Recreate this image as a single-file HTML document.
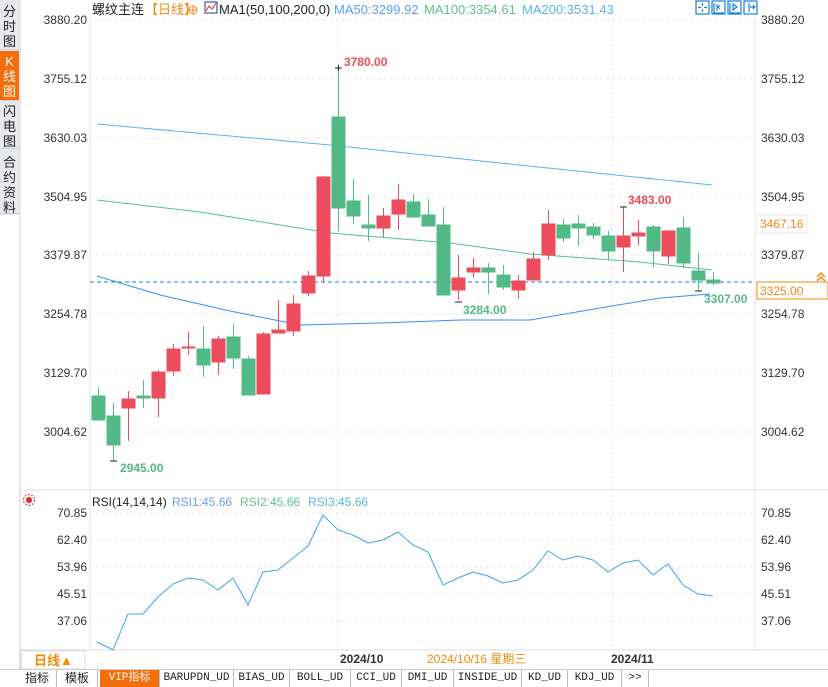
<!DOCTYPE html>
<html><head><meta charset="utf-8">
<style>
body{margin:0;width:828px;height:686px;overflow:hidden;background:#fff;font-family:"Liberation Sans","Noto Sans CJK SC",sans-serif;position:relative}
.side{position:absolute;left:0;top:0;width:19px;height:215px;background:#e6e8ee}
.side div{position:absolute;left:0;width:19px;font-size:13px;line-height:15px;text-align:center;color:#222;border-bottom:1px solid #cfd2da}
.tabs{position:absolute;left:0;top:669px;width:828px;height:17px;background:#fff;border-top:1px solid #ccc;font-size:11px}
.tabs span{position:absolute;top:0;height:17px;line-height:17px;text-align:center;border-right:1px solid #bbb;color:#222;font-family:"Liberation Mono","Noto Sans CJK SC",monospace}
svg text{font-family:"Liberation Sans","Noto Sans CJK SC",sans-serif}
</style></head><body>
<svg width="828" height="686" style="position:absolute;left:0;top:0">
<rect x="20" y="0" width="808" height="669" fill="#fff"/>
<line x1="20" y1="0" x2="20" y2="669" stroke="#ccc"/>
<line x1="90" y1="18" x2="90" y2="650" stroke="#e6e6e6"/>
<line x1="755" y1="18" x2="755" y2="650" stroke="#e6e6e6"/>
<line x1="20" y1="490" x2="828" y2="490" stroke="#ddd"/>
<line x1="20" y1="650" x2="828" y2="650" stroke="#ddd"/>
<g stroke="#e8e8e8" stroke-dasharray="3,3">
<line x1="90" y1="20" x2="755" y2="20"/><line x1="90" y1="79" x2="755" y2="79"/><line x1="90" y1="138" x2="755" y2="138"/><line x1="90" y1="197" x2="755" y2="197"/><line x1="90" y1="255" x2="755" y2="255"/><line x1="90" y1="314" x2="755" y2="314"/><line x1="90" y1="373" x2="755" y2="373"/><line x1="90" y1="432" x2="755" y2="432"/>
<line x1="90" y1="513" x2="755" y2="513"/><line x1="90" y1="540" x2="755" y2="540"/><line x1="90" y1="567" x2="755" y2="567"/><line x1="90" y1="594" x2="755" y2="594"/><line x1="90" y1="621" x2="755" y2="621"/>
<line x1="338" y1="20" x2="338" y2="650"/><line x1="612" y1="20" x2="612" y2="650"/>
</g>
<g font-size="12" fill="#333" text-anchor="end">
<text x="87" y="24">3880.20</text><text x="87" y="83">3755.12</text><text x="87" y="142">3630.03</text><text x="87" y="201">3504.95</text><text x="87" y="259">3379.87</text><text x="87" y="318">3254.78</text><text x="87" y="377">3129.70</text><text x="87" y="436">3004.62</text>
<text x="87" y="517">70.85</text><text x="87" y="544">62.40</text><text x="87" y="571">53.96</text><text x="87" y="598">45.51</text><text x="87" y="625">37.06</text>
</g>
<g font-size="12" fill="#333">
<text x="761" y="24">3880.20</text><text x="761" y="83">3755.12</text><text x="761" y="142">3630.03</text><text x="761" y="201">3504.95</text><text x="761" y="259">3379.87</text><text x="761" y="318">3254.78</text><text x="761" y="377">3129.70</text><text x="761" y="436">3004.62</text>
<text x="761" y="517">70.85</text><text x="761" y="544">62.40</text><text x="761" y="571">53.96</text><text x="761" y="598">45.51</text><text x="761" y="625">37.06</text>
</g>
<rect x="757" y="215" width="50" height="18" fill="#fff" stroke="#e4e8ec"/>
<text x="760" y="228" font-size="12" fill="#f08a18">3467.16</text>
<rect x="757" y="282" width="71" height="17" fill="#fff" stroke="#f58a0a"/>
<text x="760" y="295" font-size="12" fill="#f08a18">3325.00</text>
<path d="M817 277l4-4 4 4M817 281l4-4 4 4" stroke="#f58a0a" fill="none" stroke-width="1.5"/>
<!-- header -->
<text x="92" y="14" font-size="13" fill="#222">螺纹主连</text>
<text x="145" y="14" font-size="13" fill="#f08a18">【日线】</text>
<circle cx="193" cy="10" r="4" fill="none" stroke="#f08a18"/><path d="M189 10h8M193 6v8" stroke="#f08a18"/>
<rect x="205" y="2" width="12" height="11" fill="#fff" stroke="#223a8a"/><path d="M206 11l3-5 3 3 4-6" stroke="#d22" fill="none"/>
<text x="219" y="14" font-size="13" fill="#222">MA1(50,100,200,0)</text>
<text x="334" y="14" font-size="13" fill="#5aa0ff">MA50:3299.92</text>
<text x="424" y="14" font-size="13" fill="#5cc48a">MA100:3354.61</text>
<text x="522" y="14" font-size="13" fill="#59b6e8">MA200:3531.43</text>
<g fill="none" stroke="#1a7fd0" stroke-width="1.2">
<rect x="696" y="1" width="13" height="13"/><rect x="712" y="1" width="13" height="13"/><rect x="728" y="1" width="13" height="13"/><rect x="744" y="1" width="13" height="13"/>
<path d="M702.5 3v3M702.5 9v3M698 7.5h3M704 7.5h3M714 3v10h10M717 4v7M720 5l-2 2 2 2M730 3v10h10M733 4l4 3-4 3zM749 3v9M750 7h5M753 5l2 2-2 2"/>
</g>
<!-- MA lines -->
<polyline fill="none" stroke="#59b6e8" points="97,124 330,145 500,163 712,185"/>
<polyline fill="none" stroke="#4fc48a" points="97,200 200,212 330,233 450,243 530,254 640,262 712,270"/>
<polyline fill="none" stroke="#3a8ef5" points="97,276 160,295 230,311 300,325 380,323 460,320 530,320 600,308 660,298 710,294"/>
<line x1="90" y1="282" x2="755" y2="282" stroke="#1a7fe8" stroke-dasharray="4,3"/>
<!-- candles -->
<g id="c">
<g stroke="#52b987" fill="#52b987">
<line x1="98.5" y1="387" x2="98.5" y2="420"/><rect x="92" y="396" width="13" height="24"/>
<line x1="113.5" y1="403" x2="113.5" y2="461"/><rect x="107" y="416" width="13" height="29"/>
<line x1="143.5" y1="380" x2="143.5" y2="408"/><rect x="137" y="396" width="13" height="2"/>
<line x1="203.5" y1="326" x2="203.5" y2="377"/><rect x="197" y="349" width="13" height="16"/>
<line x1="233.5" y1="324" x2="233.5" y2="369"/><rect x="227" y="337" width="13" height="21"/>
<line x1="248.5" y1="356" x2="248.5" y2="395"/><rect x="242" y="359" width="13" height="36"/>
<line x1="338.5" y1="68" x2="338.5" y2="231"/><rect x="332" y="117" width="13" height="91"/>
<line x1="353.5" y1="179" x2="353.5" y2="224"/><rect x="347" y="201" width="13" height="15"/>
<line x1="368.5" y1="195" x2="368.5" y2="241"/><rect x="362" y="225" width="13" height="3"/>
<line x1="413.5" y1="194" x2="413.5" y2="218"/><rect x="407" y="202" width="13" height="15"/>
<line x1="428.5" y1="199" x2="428.5" y2="226"/><rect x="422" y="215" width="13" height="11"/>
<line x1="443.5" y1="207" x2="443.5" y2="295"/><rect x="437" y="225" width="13" height="70"/>
<line x1="488.5" y1="263" x2="488.5" y2="294"/><rect x="482" y="268" width="13" height="4"/>
<line x1="503.5" y1="265" x2="503.5" y2="290"/><rect x="497" y="275" width="13" height="12"/>
<line x1="563.5" y1="219" x2="563.5" y2="242"/><rect x="557" y="225" width="13" height="13"/>
<line x1="578.5" y1="215" x2="578.5" y2="246"/><rect x="572" y="224" width="13" height="4"/>
<line x1="593.5" y1="223" x2="593.5" y2="239"/><rect x="587" y="227" width="13" height="8"/>
<line x1="608.5" y1="231" x2="608.5" y2="260"/><rect x="602" y="236" width="13" height="15"/>
<line x1="653.5" y1="225" x2="653.5" y2="268"/><rect x="647" y="227" width="13" height="24"/>
<line x1="683.5" y1="217" x2="683.5" y2="268"/><rect x="677" y="228" width="13" height="35"/>
<line x1="698.5" y1="253" x2="698.5" y2="291"/><rect x="692" y="271" width="13" height="9"/>
<line x1="713.5" y1="272" x2="713.5" y2="285"/><rect x="707" y="280" width="13" height="3"/>
</g>
<g stroke="#ec4c5c" fill="#ec4c5c">
<line x1="128.5" y1="391" x2="128.5" y2="441"/><rect x="122" y="399" width="13" height="9"/>
<line x1="158.5" y1="370" x2="158.5" y2="417"/><rect x="152" y="372" width="13" height="26"/>
<line x1="173.5" y1="344" x2="173.5" y2="376"/><rect x="167" y="349" width="13" height="22"/>
<line x1="188.5" y1="332" x2="188.5" y2="355"/><rect x="182" y="347" width="13" height="1"/>
<line x1="218.5" y1="336" x2="218.5" y2="375"/><rect x="212" y="339" width="13" height="23"/>
<line x1="263.5" y1="332" x2="263.5" y2="394"/><rect x="257" y="334" width="13" height="60"/>
<line x1="278.5" y1="300" x2="278.5" y2="333"/><rect x="272" y="330" width="13" height="3"/>
<line x1="293.5" y1="295" x2="293.5" y2="336"/><rect x="287" y="304" width="13" height="27"/>
<line x1="308.5" y1="271" x2="308.5" y2="296"/><rect x="302" y="276" width="13" height="17"/>
<line x1="323.5" y1="176" x2="323.5" y2="283"/><rect x="317" y="177" width="13" height="99"/>
<line x1="383.5" y1="208" x2="383.5" y2="237"/><rect x="377" y="216" width="13" height="12"/>
<line x1="398.5" y1="184" x2="398.5" y2="230"/><rect x="392" y="200" width="13" height="14"/>
<line x1="458.5" y1="255" x2="458.5" y2="300"/><rect x="452" y="278" width="13" height="12"/>
<line x1="473.5" y1="258" x2="473.5" y2="278"/><rect x="467" y="268" width="13" height="4"/>
<line x1="518.5" y1="275" x2="518.5" y2="299"/><rect x="512" y="281" width="13" height="9"/>
<line x1="533.5" y1="252" x2="533.5" y2="280"/><rect x="527" y="259" width="13" height="21"/>
<line x1="548.5" y1="210" x2="548.5" y2="260"/><rect x="542" y="224" width="13" height="31"/>
<line x1="623.5" y1="207" x2="623.5" y2="272"/><rect x="617" y="236" width="13" height="11"/>
<line x1="638.5" y1="220" x2="638.5" y2="245"/><rect x="632" y="233" width="13" height="3"/>
<line x1="668.5" y1="230" x2="668.5" y2="264"/><rect x="662" y="231" width="13" height="25"/>
</g>
</g>
<g stroke="#222"><path d="M335 68h7M338.5 65v6M110 461h7M455 302h7M620 207h7M695 291h7"/></g>
<g font-size="12" font-weight="bold">
<text x="344" y="66" fill="#ec4c5c">3780.00</text>
<text x="120" y="472" fill="#52b987">2945.00</text>
<text x="463" y="314" fill="#52b987">3284.00</text>
<text x="628" y="204" fill="#ec4c5c">3483.00</text>
<text x="704" y="303" fill="#52b987">3307.00</text>
</g>
<!-- RSI -->
<circle cx="29" cy="500" r="3" fill="#e22"/><circle cx="29" cy="500" r="5.5" fill="none" stroke="#e22" stroke-dasharray="2,1.5"/>
<text x="92" y="506" font-size="12" fill="#222">RSI(14,14,14)</text>
<text x="172" y="506" font-size="12" fill="#6e9cf5">RSI1:45.66</text>
<text x="240" y="506" font-size="12" fill="#5cc48a">RSI2:45.66</text>
<text x="308" y="506" font-size="12" fill="#59b6e8">RSI3:45.66</text>
<polyline fill="none" stroke="#3aa8e0" points="97,642 113,650 128,614 143,614 158,597 173,584 188,578 203,580 218,590 233,578 248,605 263,572 278,570 293,558 308,546 323,515 338,530 353,535 368,543 383,540 398,532 413,545 428,552 443,585 458,578 473,572 488,576 503,583 518,580 533,570 548,551 563,560 578,556 593,560 608,572 623,563 638,560 653,575 668,564 683,585 698,594 713,596"/>
<!-- date row -->
<rect x="21" y="651" width="64" height="18" fill="#fff" stroke="#ddd"/>
<text x="34" y="665" font-size="13" font-weight="bold" fill="#f58a0a">日线▲</text>
<text x="340" y="663" font-size="12" font-weight="bold" fill="#333">2024/10</text>
<text x="427" y="663" font-size="12" fill="#f58a0a">2024/10/16 星期三</text>
<text x="611" y="663" font-size="12" font-weight="bold" fill="#333">2024/11</text>
</svg>
<div class="side">
<div style="top:0;height:50px;padding-top:4px;box-sizing:border-box">分<br>时<br>图</div>
<div style="top:51px;height:50px;background:#f56d0a;color:#fff;padding-top:3px;box-sizing:border-box">K<br>线<br>图</div>
<div style="top:102px;height:47px;padding-top:2px;box-sizing:border-box">闪<br>电<br>图</div>
<div style="top:150px;height:64px;padding-top:5px;box-sizing:border-box">合<br>约<br>资<br>料</div>
</div>
<div class="tabs">
<span style="left:18px;width:38px;font-family:'Liberation Sans','Noto Sans CJK SC',sans-serif;font-size:12px">指标</span>
<span style="left:57px;width:40px;font-family:'Liberation Sans','Noto Sans CJK SC',sans-serif;font-size:12px">模板</span>
<span style="left:100px;width:59px;background:#f56d0a;color:#fff">VIP指标</span>
<span style="left:160px;width:73px">BARUPDN_UD</span>
<span style="left:234px;width:55px">BIAS_UD</span>
<span style="left:290px;width:60px">BOLL_UD</span>
<span style="left:351px;width:50px">CCI_UD</span>
<span style="left:402px;width:51px">DMI_UD</span>
<span style="left:454px;width:67px">INSIDE_UD</span>
<span style="left:522px;width:45px">KD_UD</span>
<span style="left:568px;width:53px">KDJ_UD</span>
<span style="left:622px;width:26px">&gt;&gt;</span>
</div>
</body></html>
